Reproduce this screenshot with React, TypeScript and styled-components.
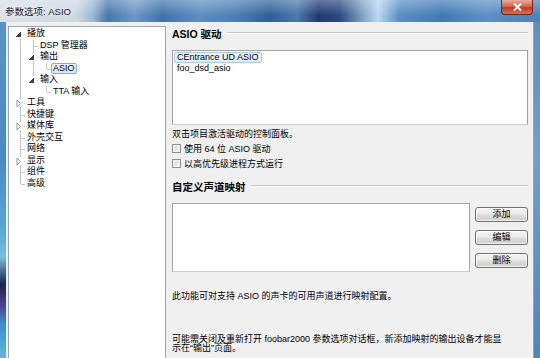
import React from 'react';
import styled, { createGlobalStyle } from 'styled-components';

const GlobalStyle = createGlobalStyle`
  html, body {
    margin: 0;
    padding: 0;
    overflow: hidden;
    background: #f0f0f0;
  }
  body {
    font-family: 'Liberation Sans', 'Noto Sans CJK SC', sans-serif;
    font-size: 9px;
    color: #000;
  }
`;

const Window = styled.div`
  width: 540px;
  height: 358px;
  display: flex;
  flex-direction: column;
  overflow: hidden;
`;

const TitleBar = styled.div`
  height: 22px;
  flex: none;
  display: flex;
  align-items: flex-start;
  background:
    linear-gradient(180deg, rgba(255, 255, 255, 0.3), rgba(255, 255, 255, 0) 70%),
    linear-gradient(
      90deg,
      #d9dfe6 0%,
      #cdd8e3 14%,
      #9fbcd9 17%,
      #4677ad 20%,
      #6d98c6 25%,
      #3f72ac 30%,
      #5f8ec0 37%,
      #4a7db5 44%,
      #2f5f98 50%,
      #4b78ad 55%,
      #223a72 59%,
      #2c4a84 63%,
      #7d9fc4 67%,
      #b8d8f2 70%,
      #5b8fc4 74%,
      #3f79b5 82%,
      #5c90c4 90%,
      #4a82bb 100%
    );
`;

const Title = styled.span`
  margin: 6px 0 0 5px;
  font-size: 9.5px;
  line-height: 12px;
  color: #1a1a1a;
  text-shadow: 0 0 4px #fff, 0 0 8px #fff;
  white-space: nowrap;
`;

const CloseButton = styled.div`
  margin-left: auto;
  margin-right: 7px;
  width: 32px;
  height: 15px;
  box-sizing: border-box;
  border: 1px solid #6b2a22;
  border-top: none;
  border-radius: 0 0 4px 4px;
  background: linear-gradient(180deg, #e9ab9c 0%, #d8664f 45%, #c23b22 55%, #d77259 100%);
  display: flex;
  align-items: center;
  justify-content: center;
`;

const Body = styled.div`
  flex: 1;
  min-height: 0;
  display: flex;
`;

const SideFrame = styled.div<{ $side: 'left' | 'right' }>`
  width: 6px;
  flex: none;
  background: ${(p) =>
    p.$side === 'left'
      ? 'linear-gradient(180deg, #5a93c7 0%, #4c88c0 40%, #5aa6d6 62%, #78bde2 70%, #1c2446 78%, #4b3f8c 84%, #3b8fcb 90%, #63b2e0 100%)'
      : 'linear-gradient(180deg, #5c8fc3 0%, #6d9fcf 40%, #5a94c8 70%, #4a86c0 100%)'};
`;

const Client = styled.div`
  flex: 1;
  min-width: 0;
  background: #f0f0f0;
  border-left: 1px solid #e6edf3;
  border-right: 1px solid #9aa3ad;
  padding: 4px 5px 0 1px;
  display: flex;
  gap: 6px;
`;

const Tree = styled.div`
  width: 158px;
  flex: none;
  box-sizing: border-box;
  border: 1px solid #9ea4ab;
  border-bottom: none;
  background: #fff;
  padding-top: 1px;
`;

const TreeRow = styled.div`
  height: 11.5px;
  display: flex;
  align-items: stretch;
`;

const TreeLabel = styled.span<{ $selected?: boolean }>`
  display: flex;
  align-items: center;
  padding: 0 1px;
  border: 1px solid ${(p) => (p.$selected ? '#84acdd' : 'transparent')};
  border-radius: 2px;
  background: ${(p) => (p.$selected ? 'linear-gradient(180deg, #eef5fd, #d5e6fb)' : 'none')};
  white-space: nowrap;
  line-height: 1;
`;

const Pane = styled.div`
  flex: 1;
  min-width: 0;
  padding-top: 1px;
  display: flex;
  flex-direction: column;
`;

const HeadingRow = styled.div<{ $top?: number }>`
  height: ${(p) => (p.$top ? 14 : 12)}px;
  margin-top: ${(p) => p.$top ?? 0}px;
  display: flex;
  align-items: center;
  gap: 5px;
`;

const Heading = styled.span`
  font-size: 10.5px;
  font-weight: bold;
  white-space: nowrap;
`;

const Rule = styled.div`
  flex: 1;
  height: 0;
  border-top: 1px solid #c4c7ca;
  border-bottom: 1px solid #fff;
`;

const ListBox = styled.div<{ $height: number; $top: number }>`
  height: ${(p) => p.$height}px;
  margin-top: ${(p) => p.$top}px;
  box-sizing: border-box;
  flex: 1;
  border: 1px solid #a3a3a3;
  border-bottom-color: #cdcdcd;
  background: #fff;
  padding: 1px;
`;

const ListItem = styled.div<{ $selected?: boolean }>`
  width: fit-content;
  height: 11px;
  box-sizing: border-box;
  display: flex;
  align-items: center;
  padding: 0 2px;
  border: 1px solid ${(p) => (p.$selected ? '#a8c8ec' : 'transparent')};
  border-radius: 2px;
  background: ${(p) => (p.$selected ? 'linear-gradient(180deg, #f1f7fe, #e0edfc)' : 'none')};
  white-space: nowrap;
  line-height: 1;
`;

const Text = styled.div<{ $top: number; $lineHeight?: number }>`
  margin-top: ${(p) => p.$top}px;
  line-height: ${(p) => p.$lineHeight ?? 11}px;
  white-space: nowrap;
`;

const CheckRow = styled.label<{ $top?: number }>`
  height: 15px;
  margin-top: ${(p) => p.$top ?? 0}px;
  display: flex;
  align-items: center;
  gap: 3px;
  white-space: nowrap;
`;

const CheckBox = styled.span`
  width: 9px;
  height: 9px;
  box-sizing: border-box;
  border: 1px solid #8e8f8f;
  background: linear-gradient(135deg, #d8d8d8, #f6f6f6);
  box-shadow: inset 0 0 0 1px #f4f4f4;
`;

const MappingRow = styled.div`
  display: flex;
  gap: 5px;
  margin-top: 10px;
`;

const ButtonColumn = styled.div`
  width: 53px;
  flex: none;
  padding-top: 4px;
  display: flex;
  flex-direction: column;
  gap: 8px;
`;

const Button = styled.div`
  height: 15px;
  box-sizing: border-box;
  border: 1px solid #707070;
  border-radius: 3px;
  background: linear-gradient(180deg, #f4f4f4 0%, #ebebeb 48%, #dddddd 52%, #cfcfcf 100%);
  box-shadow: inset 0 0 0 1px rgba(255, 255, 255, 0.7);
  display: flex;
  align-items: center;
  justify-content: center;
  line-height: 1;
`;

type Node = {
  label: string;
  level: number;
  expander?: 'open' | 'closed';
  hasNext: boolean;
  continues: boolean[];
  first?: boolean;
  selected?: boolean;
};

const tree: Node[] = [
  { label: '播放', level: 0, expander: 'open', hasNext: true, continues: [], first: true },
  { label: 'DSP 管理器', level: 1, hasNext: true, continues: [true] },
  { label: '输出', level: 1, expander: 'open', hasNext: true, continues: [true] },
  { label: 'ASIO', level: 2, hasNext: false, continues: [true, true], selected: true },
  { label: '输入', level: 1, expander: 'open', hasNext: false, continues: [true] },
  { label: 'TTA 输入', level: 2, hasNext: false, continues: [true, false] },
  { label: '工具', level: 0, expander: 'closed', hasNext: true, continues: [] },
  { label: '快捷键', level: 0, hasNext: true, continues: [] },
  { label: '媒体库', level: 0, expander: 'closed', hasNext: true, continues: [] },
  { label: '外壳交互', level: 0, hasNext: true, continues: [] },
  { label: '网络', level: 0, hasNext: true, continues: [] },
  { label: '显示', level: 0, expander: 'closed', hasNext: true, continues: [] },
  { label: '组件', level: 0, hasNext: true, continues: [] },
  { label: '高级', level: 0, hasNext: false, continues: [] },
];

const LINE = '#c6c6c6';

function Connector({ node }: { node: Node }) {
  const w = 16 + 13 * node.level;
  const h = 11.5;
  const cy = 6;
  const x0 = 11.5 + 13 * node.level;
  return (
    <svg width={w} height={h} style={{ flex: 'none' }} shapeRendering="crispEdges">
      {node.continues.map((c, i) =>
        c ? <line key={i} x1={11.5 + 13 * i} y1={0} x2={11.5 + 13 * i} y2={h} stroke={LINE} /> : null,
      )}
      <line x1={x0} y1={node.first ? cy : 0} x2={x0} y2={node.hasNext ? h : cy} stroke={LINE} />
      <line x1={x0} y1={cy + 0.5} x2={w} y2={cy + 0.5} stroke={LINE} />
      {node.expander && <rect x={x0 - 5} y={cy - 4} width={8} height={8} fill="#fff" />}
      {node.expander === 'open' && (
        <polygon points={`${x0},${cy - 2} ${x0},${cy + 2.5} ${x0 - 4.5},${cy + 2.5}`} fill="#3c3c3c" />
      )}
      {node.expander === 'closed' && (
        <polygon
          points={`${x0 - 3.5},${cy - 3} ${x0 - 3.5},${cy + 4} ${x0},${cy + 0.5}`}
          fill="#fff"
          stroke="#8c8c8c"
          strokeWidth={0.9}
          shapeRendering="auto"
        />
      )}
    </svg>
  );
}

export default function App() {
  return (
    <Window>
      <GlobalStyle />
      <TitleBar>
        <Title>参数选项: ASIO</Title>
        <CloseButton>
          <svg width="9" height="8" viewBox="0 0 9 8">
            <path d="M1 0.5 L8 7.5 M8 0.5 L1 7.5" stroke="#fff" strokeWidth="1.9" />
          </svg>
        </CloseButton>
      </TitleBar>
      <Body>
        <SideFrame $side="left" />
        <Client>
          <Tree>
            {tree.map((n) => (
              <TreeRow key={n.label}>
                <Connector node={n} />
                <TreeLabel $selected={n.selected}>{n.label}</TreeLabel>
              </TreeRow>
            ))}
          </Tree>
          <Pane>
            <HeadingRow>
              <Heading>ASIO 驱动</Heading>
              <Rule />
            </HeadingRow>
            <ListBox $height={75} $top={11} style={{ flex: 'none' }}>
              <ListItem $selected>CEntrance UD ASIO</ListItem>
              <ListItem>foo_dsd_asio</ListItem>
            </ListBox>
            <Text $top={4}>双击项目激活驱动的控制面板。</Text>
            <CheckRow $top={1}>
              <CheckBox />
              使用 64 位 ASIO 驱动
            </CheckRow>
            <CheckRow>
              <CheckBox />
              以高优先级进程方式运行
            </CheckRow>
            <HeadingRow $top={8}>
              <Heading>自定义声道映射</Heading>
              <Rule />
            </HeadingRow>
            <MappingRow>
              <ListBox $height={69} $top={0} />
              <ButtonColumn>
                <Button>添加</Button>
                <Button>编辑</Button>
                <Button>删除</Button>
              </ButtonColumn>
            </MappingRow>
            <Text $top={19}>此功能可对支持 ASIO 的声卡的可用声道进行映射配置。</Text>
            <Text $top={33} $lineHeight={9}>
              可能需关闭及重新打开 foobar2000 参数选项对话框，新添加映射的输出设备才能显
              <br />
              示在“输出”页面。
            </Text>
          </Pane>
        </Client>
        <SideFrame $side="right" />
      </Body>
    </Window>
  );
}
